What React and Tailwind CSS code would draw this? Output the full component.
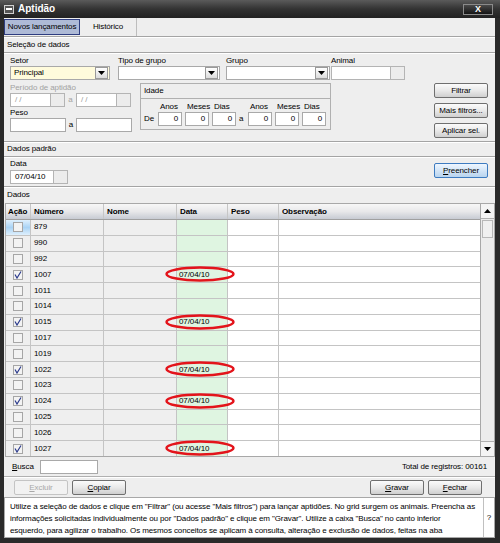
import React from 'react';

const rows = [
  { n: '879' }, { n: '990' }, { n: '992' }, { n: '1007', c: true }, { n: '1011' },
  { n: '1014' }, { n: '1015', c: true }, { n: '1017' }, { n: '1019' }, { n: '1022', c: true },
  { n: '1023' }, { n: '1024', c: true }, { n: '1025' }, { n: '1026' }, { n: '1027', c: true },
];

const Input = ({ w, value, right, className = '' }) => (
  <div className={`h-[14px] bg-white border border-[#a9a9a9] flex items-center px-[3px] ${right ? 'justify-end' : ''} ${className}`} style={{ width: w }}>
    {value}
  </div>
);

const Arrow = () => (
  <div className="w-[13px] h-[12px] mr-[1px] border border-[#9a9a9a] bg-gradient-to-b from-white to-[#dcdcdc] flex items-center justify-center">
    <svg width="7" height="4" viewBox="0 0 7 4"><path d="M0 0h7L3.5 4z" fill="#000" /></svg>
  </div>
);

const Combo = ({ w, value, yellow }) => (
  <div className={`h-[14px] border border-[#a9a9a9] flex items-center ${yellow ? 'bg-[#fffbdc]' : 'bg-white'}`} style={{ width: w }}>
    <span className="flex-1 pl-[3px]">{value}</span>
    <Arrow />
  </div>
);

const WithBtn = ({ w, value, muted }) => (
  <div className="flex h-[14px]" style={{ width: w }}>
    <div className={`flex-1 bg-white border border-[#b4b4b4] flex items-center pl-[4px] ${muted ? 'text-[#9a9a9a]' : ''}`}>{value}</div>
    <div className="w-[14px] border border-l-0 border-[#b4b4b4] bg-[#ececec]" />
  </div>
);

const Btn = ({ children, blue, disabled, className = '' }) => (
  <div className={`h-[15px] w-[54px] rounded-[2px] border flex items-center justify-center ${blue ? 'border-[#3d7bc0] bg-gradient-to-b from-[#eef6ff] to-[#b9d4ee]' : disabled ? 'border-[#c4c4c4] bg-[#f2f2f2] text-[#a8a8a8]' : 'border-[#6f6f6f] bg-gradient-to-b from-[#fbfbfb] via-[#e9e9e9] to-[#cfcfcf]'} ${className}`}>
    {children}
  </div>
);

const Check = ({ checked, focus }) => (
  <div className={`w-full h-full flex items-center justify-center ${focus ? 'bg-gradient-to-b from-[#dff0fd] via-[#a9d3f5] to-[#dff0fd]' : ''}`}>
    <div className="w-[10px] h-[10px] border border-[#a6a6a6] bg-[#f3f3f3] flex items-center justify-center">
      {checked && (
        <svg width="8" height="8" viewBox="0 0 8 8"><path d="M1 3.5L3 7 7 0.5" stroke="#2b3a8c" strokeWidth="1.2" fill="none" /></svg>
      )}
    </div>
  </div>
);

export default function App() {
  return (
    <div className="w-[500px] h-[543px] bg-[#2a2a2a] flex flex-col font-['Liberation_Sans',Arial,sans-serif] text-[8px] tracking-[-0.1px] text-black leading-none">
      {/* title bar */}
      <div className="h-[18px] flex items-center bg-gradient-to-b from-[#5b5b5b] via-[#333] to-[#222] pl-[4px] pr-[7px]">
        <div className="w-[10px] h-[9px] border border-[#d0d0d0] bg-[#555] flex items-center justify-center">
          <div className="w-[6px] h-[2px] bg-white" />
        </div>
        <span className="ml-[4px] text-white font-bold text-[10px] tracking-normal">Aptidão</span>
        <div className="flex-1" />
        <div className="w-[30px] h-[11px] border border-[#8a8a8a] bg-gradient-to-b from-[#4a4a4a] to-[#151515] flex items-center justify-center text-white font-bold text-[9px]">X</div>
      </div>

      <div className="flex-1 ml-[4px] mr-[5px] mb-[5px] bg-[#eeeeee] flex flex-col">
        {/* tabs */}
        <div className="h-[19px] flex items-center border-b border-[#a4a4a4]">
          <div className="w-[76px] h-[16px] border border-[#2e3d80] bg-[#aebad6] flex items-center justify-center">Novos lançamentos</div>
          <div className="w-[57px] h-[18px] border-r border-[#bdbdbd] flex items-center justify-center">Histórico</div>
        </div>

        <div className="h-[16px] flex items-center pl-[3px] border-t border-white border-b-[#a4a4a4] border-b">Seleção de dados</div>

        {/* row A */}
        <div className="flex pl-[6px] pt-[1px] border-t border-white">
          <div className="w-[108px] flex flex-col">
            <div className="h-[11px] flex items-center">Setor</div>
            <Combo w={100} value="Principal" yellow />
          </div>
          <div className="w-[108px] flex flex-col">
            <div className="h-[11px] flex items-center">Tipo de grupo</div>
            <Combo w={102} />
          </div>
          <div className="w-[105px] flex flex-col">
            <div className="h-[11px] flex items-center">Grupo</div>
            <Combo w={104} />
          </div>
          <div className="flex flex-col">
            <div className="h-[11px] flex items-center">Animal</div>
            <WithBtn w={74} />
          </div>
        </div>

        {/* row B */}
        <div className="flex pl-[6px] pr-[7px] h-[61px]">
          <div className="w-[126px] flex flex-col">
            <div className="h-[12px] pt-[3px] flex items-center text-[#a2a2a2]">Período de aptidão</div>
            <div className="flex items-center mt-[1px]">
              <WithBtn w={55} value="/ /" muted />
              <span className="w-[11px] text-center text-[#a2a2a2]">a</span>
              <WithBtn w={55} value="/ /" muted />
            </div>
            <div className="h-[11px] flex items-center">Peso</div>
            <div className="flex items-center">
              <Input w={56} />
              <span className="w-[10px] text-center">a</span>
              <Input w={56} />
            </div>
          </div>
          <div className="ml-[4px] mt-[3px] w-[191px] h-[47px] border border-[#b0b0b0] flex flex-col">
            <div className="h-[15px] flex items-center pl-[3px] border-b border-[#b0b0b0]">Idade</div>
            <div className="flex items-end pl-[3px] mt-[2px]">
              <span className="w-[14px] h-[14px] flex items-center">De</span>
              {[0, 1, 2].map((i) => (
                <div key={i} className="flex flex-col w-[27px]">
                  <span className="h-[11px] flex items-center pl-[2px]">{['Anos', 'Meses', 'Dias'][i]}</span>
                  <Input w={24} value="0" right />
                </div>
              ))}
              <span className="w-[9px] h-[14px] flex items-center">a</span>
              {[0, 1, 2].map((i) => (
                <div key={i} className="flex flex-col w-[27px]">
                  <span className="h-[11px] flex items-center pl-[2px]">{['Anos', 'Meses', 'Dias'][i]}</span>
                  <Input w={24} value="0" right />
                </div>
              ))}
            </div>
          </div>
          <div className="flex-1" />
          <div className="flex flex-col gap-[5px] mt-[3px]">
            <Btn>Filtrar</Btn>
            <Btn>Mais filtros...</Btn>
            <Btn>Aplicar sel.</Btn>
          </div>
        </div>

        <div className="h-[16px] flex items-center pl-[3px] border-t border-t-[#a4a4a4] border-b border-b-[#a4a4a4] shadow-[inset_0_1px_0_#fff]">Dados padrão</div>
        <div className="flex pl-[6px] pr-[7px] h-[29px] border-t border-white">
          <div className="flex flex-col">
            <div className="h-[12px] flex items-center">Data</div>
            <WithBtn w={58} value="07/04/10" />
          </div>
          <div className="flex-1" />
          <Btn blue className="mt-[5px]"><span><u>P</u>reencher</span></Btn>
        </div>

        <div className="h-[16px] flex items-center pl-[3px] border-t border-t-[#a4a4a4] shadow-[inset_0_1px_0_#fff]">Dados</div>

        {/* grid */}
        <div className="ml-[1px] mt-[1px] h-[254px] flex border border-[#a8a8a8] bg-white overflow-hidden">
          <div className="flex-1 flex flex-col">
            <div className="h-[16px] shrink-0 flex font-bold bg-gradient-to-b from-[#f7f7f7] via-[#e8e8ea] to-[#c7cbd3] border-b border-[#a0a0a0]">
              <div className="w-[25px] pl-[2px] flex items-center border-r border-[#c6c6c6]">Ação</div>
              <div className="w-[73px] pl-[3px] flex items-center border-r border-[#c6c6c6]">Número</div>
              <div className="w-[73px] pl-[3px] flex items-center border-r border-[#c6c6c6]">Nome</div>
              <div className="w-[51px] pl-[3px] flex items-center border-r border-[#c6c6c6]">Data</div>
              <div className="w-[51px] pl-[3px] flex items-center border-r border-[#c6c6c6]">Peso</div>
              <div className="flex-1 pl-[3px] flex items-center">Observação</div>
            </div>
            {rows.map((r, i) => (
              <div key={r.n} className="h-[15.8px] shrink-0 flex border-b border-[#c4c4c4]">
                <div className="w-[25px] bg-[#efefef] border-r border-[#c4c4c4]"><Check checked={r.c} focus={i === 0} /></div>
                <div className="w-[73px] pl-[3px] bg-[#efefef] flex items-center border-r border-[#c4c4c4]">{r.n}</div>
                <div className="w-[73px] bg-[#efefef] border-r border-[#c4c4c4]" />
                <div className="w-[51px] relative bg-[#dff5e1] border-r border-[#c4c4c4] flex items-center pl-[2px]">
                  {r.c && (
                    <>
                      <span>07/04/10</span>
                      <svg className="absolute left-[-12px] top-[-1px] z-10" width="70" height="16" viewBox="0 0 70 16">
                        <ellipse cx="35" cy="8" rx="33.5" ry="6.5" stroke="#e3141b" strokeWidth="2.5" fill="none" />
                      </svg>
                    </>
                  )}
                </div>
                <div className="w-[51px] border-r border-[#c4c4c4]" />
                <div className="flex-1" />
              </div>
            ))}
          </div>
          {/* scrollbar */}
          <div className="w-[14px] border-l border-[#a8a8a8] bg-[#ececec] flex flex-col">
            <div className="h-[15px] border-b border-[#b0b0b0] flex items-center justify-center bg-[#f4f4f4]">
              <svg width="7" height="4" viewBox="0 0 7 4"><path d="M0 4h7L3.5 0z" fill="#000" /></svg>
            </div>
            <div className="h-[18px] mx-[1px] mt-[1px] border border-[#b8b8b8] bg-[#f0f0f0]" />
            <div className="flex-1" />
            <div className="h-[15px] border-t border-[#b0b0b0] flex items-center justify-center bg-[#f4f4f4]">
              <svg width="7" height="4" viewBox="0 0 7 4"><path d="M0 0h7L3.5 4z" fill="#000" /></svg>
            </div>
          </div>
        </div>

        {/* busca */}
        <div className="h-[20px] flex items-center pl-[8px] pr-[8px] border-b border-[#b0b0b0]">
          <span className="w-[28px]"><u>B</u>usca</span>
          <Input w={58} />
          <div className="flex-1" />
          <span>Total de registros: 00161</span>
        </div>

        {/* buttons */}
        <div className="h-[20px] flex items-center pl-[10px] pr-[13px] border-t border-white">
          <Btn disabled><span><u>E</u>xcluir</span></Btn>
          <Btn className="ml-[4px]"><span><u>C</u>opiar</span></Btn>
          <div className="flex-1" />
          <Btn><span><u>G</u>ravar</span></Btn>
          <Btn className="ml-[4px]"><span><u>F</u>echar</span></Btn>
        </div>

        {/* help */}
        <div className="flex-1 flex bg-white border border-[#a8a8a8]">
          <div className="flex-1 pl-[5px] pt-[3px] flex flex-col leading-[12px] whitespace-nowrap">
            <span>Utilize a seleção de dados e clique em "Filtrar" (ou acesse "Mais filtros") para lançar aptidões. No grid surgem os animais. Preencha as</span>
            <span>informações solicitadas individualmente ou por "Dados padrão" e clique em  "Gravar". Utilize a caixa "Busca" no canto inferior</span>
            <span>esquerdo, para agilizar o trabalho. Os mesmos conceitos se aplicam à consulta, alteração e exclusão de dados, feitas na aba</span>
          </div>
          <div className="w-[11px] border-l border-[#c0c0c0] flex items-center justify-center">?</div>
        </div>
      </div>
    </div>
  );
}
